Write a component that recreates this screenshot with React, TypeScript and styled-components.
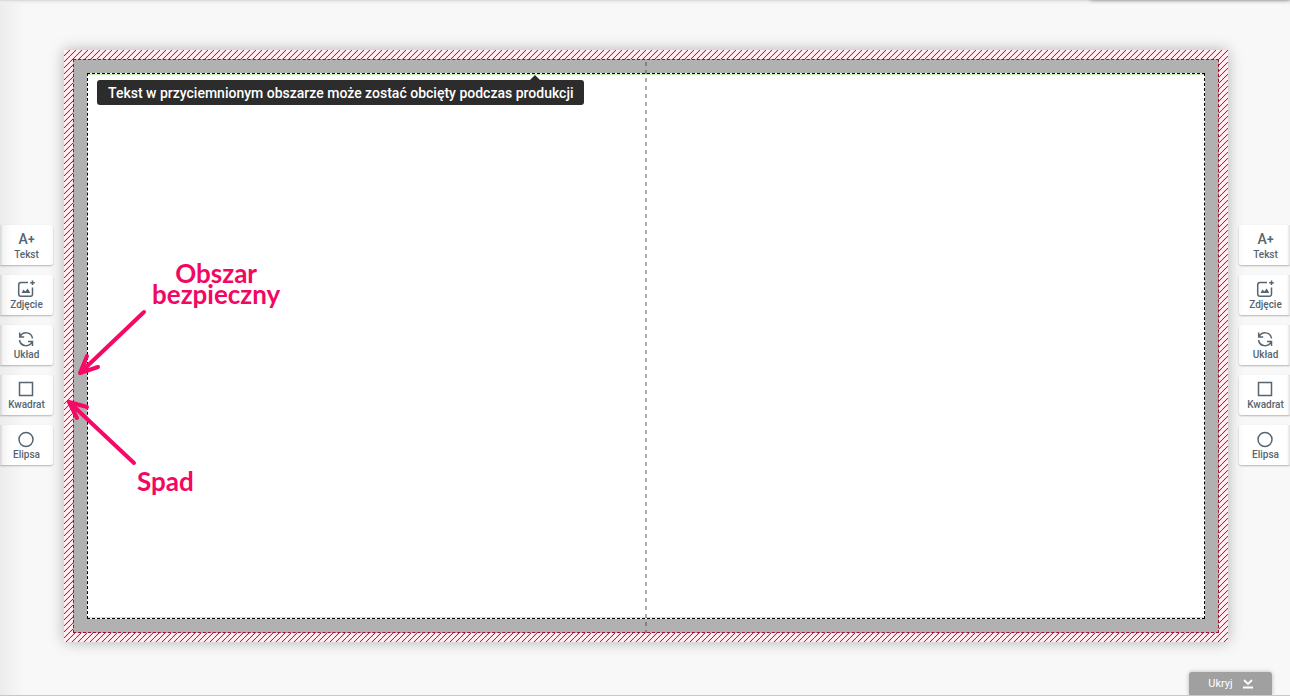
import React from "react";
import styled, { createGlobalStyle } from "styled-components";

const GlobalStyle = createGlobalStyle`
  * { box-sizing: border-box; }
  body { margin: 0; background: #f8f8f8; font-family: Roboto, "Liberation Sans", sans-serif; }
`;

const Page = styled.div`
  display: flex;
  flex-direction: column;
  min-height: 100vh;
  overflow: hidden;
  border-bottom: 1px solid #c8c8c8;
  background:
    linear-gradient(#d6d6d6, #f0f0f0 2px, transparent 5px),
    linear-gradient(90deg, #ececec, #f8f8f8 24px);
`;

const Workspace = styled.div`
  display: grid;
  flex: 1;
  grid-template-columns: 53px minmax(0, 1fr) 51px;
  column-gap: 11px;
`;

const HeaderShadow = styled.div`
  align-self: flex-end;
  width: 200px;
  height: 4px;
  margin: -4px 0 0;
  border-radius: 4px;
  box-shadow: 0 0 4px rgba(0, 0, 0, 0.4);
`;

const ToolBar = styled.nav`
  display: flex;
  flex-direction: column;
  justify-content: center;
  gap: 10px;
  padding-top: 18px;
`;

const Tool = styled.button<{ $side: "left" | "right" }>`
  display: flex;
  flex-direction: column;
  align-items: center;
  height: 40px;
  padding: 5px 0 0 ${(p) => (p.$side === "right" ? "2px" : "0")};
  border: 0;
  border-radius: ${(p) => (p.$side === "left" ? "0 3px 3px 0" : "3px 0 0 3px")};
  background: ${(p) =>
    p.$side === "left"
      ? "linear-gradient(90deg, #d4d4d4, #f4f4f4 3px, #fff 12px)"
      : "linear-gradient(270deg, #dedede, #fff 3px)"};
  box-shadow: 0 1px 2px rgba(0, 0, 0, 0.28);
  color: #56656f;
  font: 500 10px/12px Roboto, sans-serif;
  cursor: pointer;

  svg {
    width: 19px;
    height: 18px;
    fill: none;
    stroke: currentColor;
    stroke-width: 1.5;
    margin-bottom: 1px;
  }
`;

const TextGlyph = styled.span`
  height: 18px;
  margin-bottom: 1px;
  font: 500 14px/18px Roboto, sans-serif;
`;

const PlusGlyph = styled.span`
  font-size: 12px;
  font-weight: 700;
`;

const Spread = styled.main`
  position: relative;
  display: flex;
  margin: 50px 0 30px;
  padding: 9px;
  background-color: #fff0f1;
  background-image: linear-gradient(
    135deg,
    transparent 40%,
    #fcd6de 40% 46%,
    #bd1b4b 46% 54%,
    #fcd6de 54% 60%,
    transparent 60%
  );
  background-size: 6px 6px;
  box-shadow: 0 0 14px rgba(0, 0, 0, 0.28);
`;

const TrimArea = styled.div`
  display: flex;
  flex: 1;
  padding: 13px;
  border: 1px dashed #a80c30;
  background: #b1b1b1;
`;

const SafeArea = styled.section`
  flex: 1;
  border: 1px dashed #000;
  background: #fff;
  box-shadow: inset 0 1px #c4e8b0, inset 0 -1px #c4e8b0;
`;

const Fold = styled.div`
  position: absolute;
  top: 9px;
  bottom: 9px;
  left: 50%;
  width: 2px;
  margin-left: -1px;
  background: repeating-linear-gradient(transparent 0 3px, rgba(60, 60, 60, 0.42) 3px 7px, transparent 7px 8px);
`;

const Tooltip = styled.div`
  position: absolute;
  top: 30px;
  left: 33px;
  padding: 1px 11px 0;
  border-radius: 3px;
  background: #2c2c2c;
  color: #fff;
  font-size: 14px;
  font-weight: 500;
  line-height: 24px;
  white-space: nowrap;

  &::before {
    content: "";
    position: absolute;
    bottom: 100%;
    right: 44px;
    border: 5px solid transparent;
    border-top: 0;
    border-bottom-color: #2c2c2c;
  }
`;

const Note = styled.p<{ $top: number; $left: number }>`
  position: absolute;
  top: ${(p) => p.$top}px;
  left: ${(p) => p.$left}px;
  margin: 0;
  color: #f20862;
  font: 700 26px/21px Lato, sans-serif;
  text-align: center;
`;

const Arrows = styled.svg`
  position: absolute;
  top: 250px;
  left: 0;
  width: 90px;
  height: 170px;
  fill: none;
  stroke: #f60865;
  stroke-width: 4;
  stroke-linecap: round;
  stroke-linejoin: round;
`;

const BottomBar = styled.footer`
  display: flex;
  justify-content: flex-end;
  padding-right: 18px;
`;

const HideButton = styled.button`
  display: flex;
  align-items: center;
  justify-content: center;
  gap: 9px;
  width: 83px;
  height: 23px;
  padding: 1px 0 0 1px;
  border: 0;
  border-radius: 3px 3px 0 0;
  background: #a0a0a0;
  box-shadow: 0 0 4px rgba(0, 0, 0, 0.25);
  color: #fff;
  font: 400 11px/22px Roboto, sans-serif;
  cursor: pointer;
`;

const tools = [
  {
    label: "Tekst",
    icon: <TextGlyph>A<PlusGlyph>+</PlusGlyph></TextGlyph>,
  },
  {
    label: "Zdjęcie",
    icon: (
      <svg viewBox="1 0 19 18" aria-hidden="true">
        <path d="M12 2.500H5Q2.700 2.500 2.700 5V14Q2.700 16.300 5 16.300H14.500Q16.500 16.300 16.500 14V7.500" />
        <path d="M16.500 0.500V5M14.200 2.700H18.800" />
        <path d="M5.500 13L7.500 9.500L9.300 11.500L11.700 8.500L14.300 13Z" fill="currentColor" stroke="none" />
      </svg>
    ),
  },
  {
    label: "Układ",
    icon: (
      <svg viewBox="1 0 19 18" aria-hidden="true">
        <path d="M3.700 2.500V7H8.200M4 7C6.500 1 15.500 1.500 16.500 8.500M16.500 16V11.500H12M16.300 11.500C13.500 17.500 4.800 17 3.500 10" />
      </svg>
    ),
  },
  {
    label: "Kwadrat",
    icon: (
      <svg viewBox="1 0 19 18" aria-hidden="true">
        <rect x="3.500" y="2.500" width="13" height="13" />
      </svg>
    ),
  },
  {
    label: "Elipsa",
    icon: (
      <svg viewBox="1 0 19 18" aria-hidden="true">
        <circle cx="10" cy="9.500" r="7" />
      </svg>
    ),
  },
];

function Tools({ side }: { side: "left" | "right" }) {
  return (
    <ToolBar>
      {tools.map((t) => (
        <Tool key={t.label} type="button" $side={side}>
          {t.icon}
          {t.label}
        </Tool>
      ))}
    </ToolBar>
  );
}

export default function App() {
  return (
    <>
      <GlobalStyle />
      <Page>
        <HeaderShadow />
        <Workspace>
          <Tools side="left" />
          <Spread>
            <TrimArea>
              <SafeArea />
            </TrimArea>
            <Fold />
            <Tooltip role="tooltip">Tekst w przyciemnionym obszarze może zostać obcięty podczas produkcji</Tooltip>
            <Note $top={213} $left={88}>
              Obszar
              <br />
              bezpieczny
            </Note>
            <Note $top={421} $left={73}>Spad</Note>
            <Arrows viewBox="0 0 90 170" aria-hidden="true">
              <path d="M80 12L16 73M23 56L16 73L34 67" />
              <path d="M70 163L5 102M13 118L5 102L23 107" />
            </Arrows>
          </Spread>
          <Tools side="right" />
        </Workspace>
        <BottomBar>
          <HideButton type="button">
            Ukryj
            <svg width="12" height="10" viewBox="0 0 12 10" fill="none" stroke="currentColor" strokeWidth="1.800" aria-hidden="true">
              <path d="M2 1L6 5L10 1M1 8.500H11" />
            </svg>
          </HideButton>
        </BottomBar>
      </Page>
    </>
  );
}
